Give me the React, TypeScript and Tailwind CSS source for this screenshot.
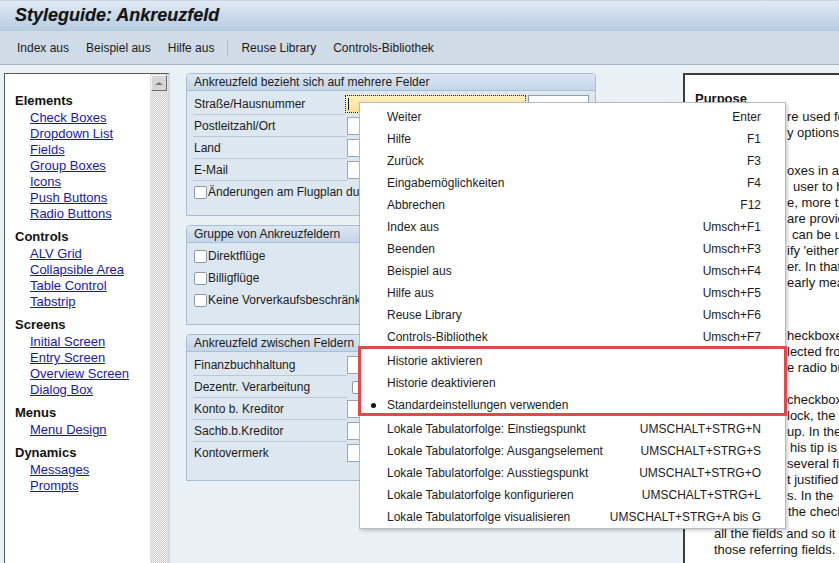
import React from "react";

const navSections = [
  { title: "Elements", links: ["Check Boxes", "Dropdown List", "Fields", "Group Boxes", "Icons", "Push Buttons", "Radio Buttons"] },
  { title: "Controls", links: ["ALV Grid", "Collapsible Area", "Table Control", "Tabstrip"] },
  { title: "Screens", links: ["Initial Screen", "Entry Screen", "Overview Screen", "Dialog Box"] },
  { title: "Menus", links: ["Menu Design"] },
  { title: "Dynamics", links: ["Messages", "Prompts"] },
];

type MenuEntry = { label: string; key?: string; bullet?: boolean } | "sep";

const menuItems: MenuEntry[] = [
  { label: "Weiter", key: "Enter" },
  { label: "Hilfe", key: "F1" },
  { label: "Zurück", key: "F3" },
  { label: "Eingabemöglichkeiten", key: "F4" },
  { label: "Abbrechen", key: "F12" },
  { label: "Index aus", key: "Umsch+F1" },
  { label: "Beenden", key: "Umsch+F3" },
  { label: "Beispiel aus", key: "Umsch+F4" },
  { label: "Hilfe aus", key: "Umsch+F5" },
  { label: "Reuse Library", key: "Umsch+F6" },
  { label: "Controls-Bibliothek", key: "Umsch+F7" },
  "sep",
  { label: "Historie aktivieren" },
  { label: "Historie deaktivieren" },
  { label: "Standardeinstellungen verwenden", bullet: true },
  "sep",
  { label: "Lokale Tabulatorfolge: Einstiegspunkt", key: "UMSCHALT+STRG+N" },
  { label: "Lokale Tabulatorfolge: Ausgangselement", key: "UMSCHALT+STRG+S" },
  { label: "Lokale Tabulatorfolge: Ausstiegspunkt", key: "UMSCHALT+STRG+O" },
  { label: "Lokale Tabulatorfolge konfigurieren", key: "UMSCHALT+STRG+L" },
  { label: "Lokale Tabulatorfolge visualisieren", key: "UMSCHALT+STRG+A bis G" },
];

// [covered part, visible part, width of covered part]
const purposeBlocks: { mt: string; indent?: boolean; lines: [string, string, string][] }[] = [
  {
    mt: "",
    lines: [
      ["Checkboxes a", "re used for", "w-[92px]"],
      ["to offer man", "y options", "w-[92px]"],
    ],
  },
  {
    mt: "mt-[22px]",
    lines: [
      ["Use checkb", "oxes in a", "w-[92px]"],
      ["group to allow the", "user to have", "w-[98px]"],
      ["one choice, mor", "e, more than", "w-[92px]"],
      ["if several options", "are provided", "w-[92px]"],
      ["Checkboxes", "can be used", "w-[97px]"],
      ["also to spec", "ify 'either", "w-[92px]"],
      ["or' togeth", "er. In that", "w-[92px]"],
      ["case it is cl", "early meant", "w-[92px]"],
    ],
  },
  {
    mt: "mt-[37px]",
    lines: [
      ["Use single c", "heckboxes", "w-[92px]"],
      ["if one is se", "lected from", "w-[92px]"],
      ["a list, otherwis", "e radio buttons", "w-[92px]"],
    ],
  },
  {
    mt: "mt-[16px]",
    indent: true,
    lines: [
      ["Place the ", "checkboxes", "w-[73px]"],
      ["in a b", "lock, the", "w-[73px]"],
      ["gro", "up. In the", "w-[73px]"],
      ["case, t", "his tip is", "w-[76px]"],
      ["for ", "several fields", "w-[73px]"],
      ["lef", "t justified", "w-[73px]"],
      ["field", "s. In the", "w-[73px]"],
      ["place ", "the checkbox", "w-[74px]"],
    ],
  },
];

function GroupBox({ title, pb, children }: { title: string; pb: string; children: React.ReactNode }) {
  return (
    <div className="border border-[#a7bcd2] rounded-t-[4px] bg-[#dde7f0]">
      <div className="h-[17px] leading-[17px] pl-[7px] text-[12px] text-[#1b1b1b] bg-gradient-to-b from-[#dce7f2] to-[#c3d5e8] border-b border-[#a9bfd5] rounded-t-[3px] whitespace-nowrap overflow-hidden">
        {title}
      </div>
      <div className={`px-[6px] pt-[2px] ${pb}`}>{children}</div>
    </div>
  );
}

function FieldRow({ label, line = true, children }: { label: string; line?: boolean; children?: React.ReactNode }) {
  return (
    <div className="h-[22px] flex items-center">
      <div className={`w-[154px] h-[22px] pl-[1px] flex items-center ${line ? "border-b border-[#b9c9d8]" : ""}`}>
        <span className="text-[12px] text-[#1b1b1b] whitespace-nowrap">{label}</span>
      </div>
      {children ?? <div className="w-[120px] h-[18px] bg-white border border-[#9aa6b2]" />}
    </div>
  );
}

function Check({ label }: { label: string }) {
  return (
    <div className="h-[22px] flex items-center gap-[1px] pl-[1px]">
      <div className="w-[13px] h-[13px] shrink-0 bg-white border border-[#8f9aa5] rounded-[2px]" />
      <span className="max-w-[151px] overflow-hidden text-[12px] text-[#1b1b1b] whitespace-nowrap">{label}</span>
    </div>
  );
}

export default function App() {
  return (
    <div className="w-[839px] h-[563px] overflow-hidden relative bg-[#e9f0f6] font-['Liberation_Sans',Arial,sans-serif]">
      {/* Title */}
      <div className="h-[31px] flex items-center pl-[15px] pb-[2px] bg-gradient-to-b from-[#dfe9f3] to-[#b7cbe0] border-t border-[#c5d4e3]">
        <h1 className="text-[18px] font-bold italic text-[#141414] [text-shadow:0_0_1px_rgba(0,0,0,0.25)]">Styleguide: Ankreuzfeld</h1>
      </div>

      {/* Toolbar */}
      <div className="h-[34px] flex items-center gap-[17px] pl-[17px] bg-[#cfdce7] border-b border-[#a6b6c6] text-[12px] text-[#1b1b1b]">
        <span>Index aus</span>
        <span>Beispiel aus</span>
        <span>Hilfe aus</span>
        <div className="w-px h-[16px] bg-[#aebdcc] -mx-[4px]" />
        <span>Reuse Library</span>
        <span>Controls-Bibliothek</span>
      </div>

      {/* Main */}
      <div className="flex pt-[8px]">
        {/* Left nav */}
        <div className="ml-[4px] w-[166px] h-[490px] flex bg-white border-l border-t border-[#595959] border-r-2 border-r-[#d3d9df]">
          <div className="flex-1 pl-[10px] pt-[19px] text-[13px] leading-[16px]">
            {navSections.map((s, i) => (
              <div key={s.title} className={i === 0 ? "" : "mt-[7px]"}>
                <div className="font-bold text-[#111] mb-[1px]">{s.title}</div>
                {s.links.map((l) => (
                  <div key={l} className="pl-[15px]">
                    <span className="text-[#1a1a9e] underline">{l}</span>
                  </div>
                ))}
              </div>
            ))}
          </div>
          <div className="w-[18px] bg-[repeating-conic-gradient(#cdcdcd_0%_25%,#f3f3f3_0%_50%)] bg-[length:2px_2px] pt-[1px] pl-[1px]">
            <div className="w-[16px] h-[16px] bg-[#d6d6d6] border border-t-[#f4f4f4] border-l-[#f4f4f4] border-r-[#707070] border-b-[#707070] flex items-center justify-center">
              <div className="w-0 h-0 border-l-[4px] border-r-[4px] border-b-[3px] border-l-transparent border-r-transparent border-b-[#7a7a7a]" />
            </div>
          </div>
        </div>

        {/* Middle */}
        <div className="ml-[16px] w-[410px] flex flex-col gap-[9px]">
          <GroupBox title="Ankreuzfeld bezieht sich auf mehrere Felder" pb="pb-[12px]">
            <FieldRow label="Straße/Hausnummer">
              <div className="flex items-center gap-[2px]">
                <div className="relative w-[181px] h-[18px] bg-gradient-to-b from-[#fdf0c0] to-[#f9e094] border border-dotted border-[#222]">
                  <div className="absolute left-[2px] top-[2px] w-px h-[12px] bg-[#111]" />
                </div>
                <div className="w-[61px] h-[18px] bg-white border border-[#8f9aa5]" />
              </div>
            </FieldRow>
            <FieldRow label="Postleitzahl/Ort" />
            <FieldRow label="Land" />
            <FieldRow label="E-Mail" />
            <Check label="Änderungen am Flugplan durch Fluggesellschaft" />
          </GroupBox>

          <GroupBox title="Gruppe von Ankreuzfeldern" pb="pb-[13px]">
            <Check label="Direktflüge" />
            <Check label="Billigflüge" />
            <Check label="Keine Vorverkaufsbeschränkung" />
          </GroupBox>

          <GroupBox title="Ankreuzfeld zwischen Feldern" pb="pb-[16px]">
            <FieldRow label="Finanzbuchhaltung" />
            <FieldRow label="Dezentr. Verarbeitung">
              <div className="ml-[5px] w-[13px] h-[13px] bg-white border border-[#8f9aa5] rounded-[2px]" />
            </FieldRow>
            <FieldRow label="Konto b. Kreditor" />
            <FieldRow label="Sachb.b.Kreditor" />
            <FieldRow label="Kontovermerk" line={false} />
          </GroupBox>
        </div>

        {/* Right description (mostly covered by the context menu) */}
        <div className="ml-[87px] flex-1 h-[490px] bg-white border-l-2 border-t-2 border-[#3c3c3c] pl-[10px] pt-[16px] text-[13px] leading-[16px] text-[#161616] overflow-hidden whitespace-nowrap">
          <div className="font-bold mb-[2px]">Purpose</div>
          {purposeBlocks.map((b, i) => (
            <div key={i} className={`${b.mt} ${b.indent ? "pl-[19px]" : ""}`}>
              {b.lines.map(([hidden, shown, w]) => (
                <div key={shown} className="flex">
                  <span className={`invisible shrink-0 overflow-hidden ${w}`}>{hidden}</span>
                  <span>{shown}</span>
                </div>
              ))}
            </div>
          ))}
          <div className="mt-[6px] pl-[19px]">
            <div>all the fields and so it</div>
            <div>those referring fields.</div>
          </div>
        </div>
      </div>

      {/* Context menu */}
      <div className="absolute left-[359px] top-[102px] w-[427px] bg-white border border-[#b3bcc5] shadow-[2px_2px_3px_rgba(0,0,0,0.18)] pt-[3px] text-[12px] text-[#1c1c1c]">
        {menuItems.map((m, i) =>
          m === "sep" ? (
            <div key={i} className="h-[2px]" />
          ) : (
            <div key={i} className="relative h-[22px] flex items-center justify-between pl-[27px] pr-[24px] whitespace-nowrap">
              {m.bullet && <div className="absolute left-[11px] top-[9px] w-[5px] h-[5px] rounded-full bg-[#111]" />}
              <span>{m.label}</span>
              <span>{m.key}</span>
            </div>
          )
        )}
      </div>

      {/* Highlight frame */}
      <div className="absolute left-[358px] top-[346px] w-[429px] h-[70px] border-[3px] border-[#e5484b]" />
    </div>
  );
}
